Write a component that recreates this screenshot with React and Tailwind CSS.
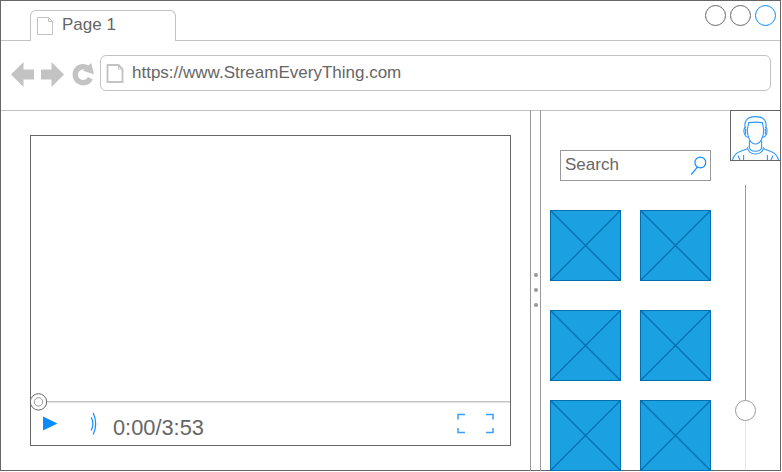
import React from "react";

function PageIcon({ className, strokeWidth }) {
  return (
    <svg className={className} viewBox="0 0 18 20" fill="none" stroke="#c3c3c3" strokeWidth={strokeWidth}>
      <path d="M1.5 1.5H12.5L16.5 5.5V18.5H1.5Z" />
      <path d="M12.5 1.5V5.5H16.5" strokeWidth="1" />
    </svg>
  );
}

function Tab() {
  return (
    <div className="flex h-[31px] w-[146px] items-start rounded-t-md border border-b-0 border-[#c3c3c3]">
      <PageIcon className="mt-[5px] ml-[5px] h-[20px] w-[18px]" strokeWidth="1" />
      <span className="mt-[4px] ml-[8px] text-[17px] leading-[20px]">Page 1</span>
    </div>
  );
}

function TopBar() {
  return (
    <div className="flex h-[40px] items-end">
      <div className="w-[29px] border-b border-[#c3c3c3]" />
      <Tab />
      <div className="flex h-[40px] flex-1 justify-end gap-[4px] border-b border-[#c3c3c3] pt-[4px] pr-[4px]">
        <div className="size-[21px] rounded-full border border-[#666]" />
        <div className="size-[21px] rounded-full border border-[#666]" />
        <div className="size-[21px] rounded-full border border-[#0a8bff]" />
      </div>
    </div>
  );
}

function Toolbar() {
  return (
    <div className="flex h-[70px] border-b border-[#c3c3c3]">
      <svg className="mt-[19px] ml-[9px] h-[30px] w-[90px]" viewBox="10 60 90 30" fill="#c3c3c3">
        <path d="M11 74.5L23.5 62V69.5H34V79.5H23.5V87Z" />
        <path d="M64 74.5L51.5 62V69.5H41V79.5H51.5V87Z" />
        <path d="M88.5 68.7A8 8 0 1 0 90.4 78.2" fill="none" stroke="#c3c3c3" strokeWidth="5.4" />
        <path d="M91.2 63L94 74.2L83 70.8Z" />
      </svg>
      <div className="mt-[14px] flex h-[36px] w-[671px] items-start rounded-md border border-[#c3c3c3]">
        <PageIcon className="mt-[7px] ml-[5px] h-[21px] w-[18px]" strokeWidth="1.9" />
        <span className="mt-[7px] ml-[8px] text-[17px] leading-[20px]">https://www.StreamEveryThing.com</span>
      </div>
    </div>
  );
}

function Player() {
  return (
    <div className="flex h-[311px] w-[481px] flex-col border border-[#666]">
      <div className="h-[265px]" />
      <div className="relative h-[2px] border-t border-[#c3c3c3] bg-[#e3e3e3]">
        <svg className="absolute -top-[10px] -left-[2px] size-[19px]" viewBox="0 0 19 19" fill="white" stroke="#666">
          <circle cx="9.5" cy="9.9" r="8.2" />
          <circle cx="9.5" cy="9.9" r="4.2" stroke="#999" />
        </svg>
      </div>
      <div className="flex flex-1">
        <svg className="mt-[13px] ml-[12px] h-[15px] w-[15px]" viewBox="0 0 15 15" fill="#0a8bff">
          <path d="M0 0.5V14.5L14.5 7.5Z" />
        </svg>
        <svg className="mt-[9px] ml-[32px] h-[24px] w-[9px]" viewBox="0 0 9 24" fill="none" stroke="#0a8bff" strokeWidth="1.2">
          <path d="M1.2 5.2Q4.6 12 1.2 18.6" />
          <path d="M3.2 1Q8.2 12 3.2 22.6" />
        </svg>
        <span className="mt-[12px] ml-[14px] w-[120px] text-[21.8px] leading-[26px]">0:00/3:53</span>
        <svg className="mt-[10px] ml-[224px] h-[21px] w-[38px]" viewBox="0 0 38 21" fill="none" stroke="#3a9fff" strokeWidth="1.5">
          <path d="M1 6.5V1.5H8M29 1.5H36V6.5M36 15V19.5H29M8 19.5H1V15" />
        </svg>
      </div>
    </div>
  );
}

function Splitter() {
  return (
    <div className="-mt-px flex h-[361px] w-[11px] flex-col items-center gap-[11px] border-x border-[#999] pt-[163px]">
      <div className="size-[4px] shrink-0 rounded-full bg-[#999]" />
      <div className="size-[4px] shrink-0 rounded-full bg-[#999]" />
      <div className="size-[4px] shrink-0 rounded-full bg-[#999]" />
    </div>
  );
}

function Tile() {
  return (
    <svg className="size-[71px]" viewBox="0 0 71 71" fill="#1ba1e2" stroke="#006eaf">
      <rect x="0.5" y="0.5" width="70" height="70" />
      <path d="M0.5 0.5L70.5 70.5M70.5 0.5L0.5 70.5" strokeWidth="1.3" />
    </svg>
  );
}

function TileRow() {
  return (
    <div className="flex gap-[19px]">
      <Tile />
      <Tile />
    </div>
  );
}

function Library() {
  return (
    <div className="flex w-[189px] flex-col pt-[39px] pl-[9px]">
      <div className="ml-[10px] flex h-[31px] w-[151px] shrink-0 justify-between border border-[#999] pl-[4px]">
        <span className="mt-[4px] text-[17px] leading-[20px]">Search</span>
        <svg className="mt-[5px] mr-[3px] h-[20px] w-[17px]" viewBox="0 0 17 20" fill="none" stroke="#0a8bff" strokeWidth="1.2">
          <circle cx="10.3" cy="6.5" r="5.4" />
          <path d="M7.3 11.2L1.2 18.6" />
        </svg>
      </div>
      <div className="mt-[29px]"><TileRow /></div>
      <div className="mt-[29px]"><TileRow /></div>
      <div className="mt-[19px]"><TileRow /></div>
    </div>
  );
}

function Avatar() {
  return (
    <div className="size-[51px] shrink-0 border border-[#666]">
      <svg className="size-[49px]" viewBox="731 111 49 49" fill="none" stroke="#2b98ff" strokeWidth="1.1">
        <path d="M745.3 128.5C743.5 120.5 747.5 116.6 755.5 116.6C763.5 116.6 767.5 120.5 765.7 128.5" />
        <path d="M747.3 129.5L748.7 122.6Q755.5 121.6 762.3 122.6L763.7 129.5" />
        <path d="M747.3 129C747 137.5 751 144 755.5 144C760 144 764 137.5 763.7 129" />
        <path d="M746 127C742.8 128 743.3 136 747.8 137.4M765 127C768.2 128 767.7 136 763.2 137.4" />
        <path d="M745.6 129V134.5M765.4 129V134.5" />
        <path d="M749.4 140.5V147.5M761.6 140.5V147.5" />
        <path d="M749.2 146.5C749.8 152.9 761.2 152.9 761.8 146.5" />
        <path d="M747.5 147.3C747.8 156.3 763.2 156.3 763.5 147.3" />
        <path d="M747.3 148.7L740.7 151.2C735.5 153 733.2 156 732.4 160.5M763.7 148.7L770.3 151.2C775.5 153 777.8 156 778.6 160.5" />
        <path d="M738 155.5L740.2 160.5M773 155.5L770.8 160.5M743.6 155V160.5M767.4 155V160.5" />
      </svg>
    </div>
  );
}

function Scroller() {
  return (
    <div className="-mt-px flex h-[360px] w-[51px] shrink-0 flex-col">
      <Avatar />
      <div className="mt-[24px] ml-[15px] h-[215px] w-px bg-[#999]" />
      <div className="ml-[5px] size-[21px] shrink-0 rounded-full border border-[#999]" />
      <div className="ml-[15px] w-px flex-1 bg-[#e1e8ee]" />
    </div>
  );
}

export default function App() {
  return (
    <div className="h-[472px] w-[782px] overflow-hidden bg-white font-['Liberation_Sans',Arial,sans-serif] text-[#666]">
      <div className="h-[471px] w-[781px] border border-[#666]">
        <TopBar />
        <Toolbar />
        <div className="flex h-[359px] w-[780px]">
          <div className="w-[529px] pt-[24px] pl-[29px]">
            <Player />
          </div>
          <Splitter />
          <Library />
          <Scroller />
        </div>
      </div>
    </div>
  );
}
